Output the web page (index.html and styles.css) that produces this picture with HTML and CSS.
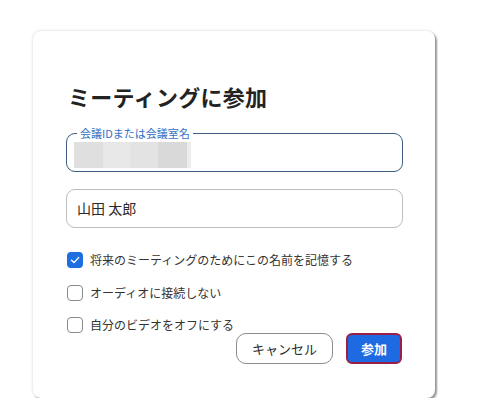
FILE: index.html
```html
<!DOCTYPE html>
<html lang="ja">
<head>
<meta charset="utf-8">
<title>ミーティングに参加</title>
<link rel="stylesheet" href="styles.css">
</head>
<body>
<div class="page">
  <div class="card">
    <h1 class="title">ミーティングに参加</h1>
    <div class="field field-active">
      <span class="field-label">会議IDまたは会議室名</span>
      <div class="redacted">
        <span class="r1"></span><span class="r2"></span><span class="r3"></span><span class="r4"></span><span class="r5"></span>
      </div>
    </div>
    <div class="field field-name">山田 太郎</div>
    <div class="options">
      <div class="option">
        <span class="box checked">
          <svg viewBox="0 0 16 16" width="16" height="16"><path d="M4.5 8.3 L7 10.6 L11.6 5.6" fill="none" stroke="#fff" stroke-width="1.4" stroke-linecap="round" stroke-linejoin="round"/></svg>
        </span>
        <span class="opt-text">将来のミーティングのためにこの名前を記憶する</span>
      </div>
      <div class="option">
        <span class="box"></span>
        <span class="opt-text">オーディオに接続しない</span>
      </div>
      <div class="option">
        <span class="box"></span>
        <span class="opt-text">自分のビデオをオフにする</span>
      </div>
    </div>
    <div class="actions">
      <button class="btn btn-cancel">キャンセル</button>
      <button class="btn btn-join">参加</button>
    </div>
  </div>
</div>
</body>
</html>
```
FILE: styles.css
```css
html, body {
  margin: 0;
  padding: 0;
  background: #ffffff;
}
body {
  font-family: "Noto Sans CJK JP", "Noto Sans", sans-serif;
  color: #333333;
}
.page {
  padding: 31px 0 0 33px;
}
.card {
  width: 402px;
  height: 367px;
  box-sizing: border-box;
  padding: 0 32px 0 33px;
  background: #ffffff;
  border-radius: 8px;
  box-shadow: 2px 2px 2px rgba(0, 0, 0, 0.38), 0 0 3px rgba(0, 0, 0, 0.18);
  display: flex;
  flex-direction: column;
}
.title {
  margin: 51px 0 0 2px;
  font-size: 22px;
  line-height: 28px;
  font-weight: 700;
  color: #232323;
  letter-spacing: 0.3px;
}
.field {
  position: relative;
  height: 39px;
  box-sizing: border-box;
  border-radius: 9px;
}
.field-active {
  margin-top: 23px;
  border: 1.3px solid #3d5d82;
  padding: 8px 0 0 7px;
}
.field-label {
  position: absolute;
  top: -8px;
  left: 10px;
  padding: 0 3px;
  background: #ffffff;
  font-size: 11px;
  line-height: 14px;
  color: #3470c4;
}
.redacted {
  display: flex;
  height: 26px;
}
.redacted span {
  display: block;
  height: 26px;
}
.r1 { width: 29px; background: #dfdfdf; }
.r2 { width: 27px; background: #e7e7e7; }
.r3 { width: 28px; background: #e3e3e3; }
.r4 { width: 29px; background: #d9d9d9; }
.r5 { width: 4px; background: #ececec; }
.field-name {
  margin-top: 17px;
  border: 1px solid #bdbdbd;
  padding: 0 0 0 10px;
  font-size: 14px;
  line-height: 37px;
  color: #2a2a2a;
}
.options {
  margin-top: 24px;
  display: flex;
  flex-direction: column;
  gap: 16.5px;
}
.option {
  display: flex;
  align-items: center;
  height: 16px;
  margin-left: 1px;
}
.box {
  width: 16px;
  height: 16px;
  box-sizing: border-box;
  border: 1px solid #8a8a8a;
  border-radius: 4px;
  background: #ffffff;
  flex: none;
  display: block;
}
.box.checked {
  border: none;
  background: #1f6fe0;
}
.box svg {
  display: block;
}
.opt-text {
  margin-left: 7px;
  font-size: 12px;
  line-height: 16px;
  color: #333333;
}
.actions {
  display: flex;
  justify-content: flex-end;
  gap: 13px;
  margin: 0 1px 0 0;
}
.btn {
  height: 31px;
  box-sizing: border-box;
  font-family: "Noto Sans CJK JP", "Noto Sans", sans-serif;
  font-size: 13px;
  padding: 0;
  cursor: pointer;
}
.btn-cancel {
  width: 97px;
  border: 1px solid #8c8c8c;
  border-radius: 10px;
  background: #ffffff;
  color: #2a2a2a;
}
.btn-join {
  width: 56px;
  border: 2px solid #9a2143;
  border-radius: 6px;
  background: #1d6ae3;
  color: #ffffff;
  font-weight: 700;
}
```
